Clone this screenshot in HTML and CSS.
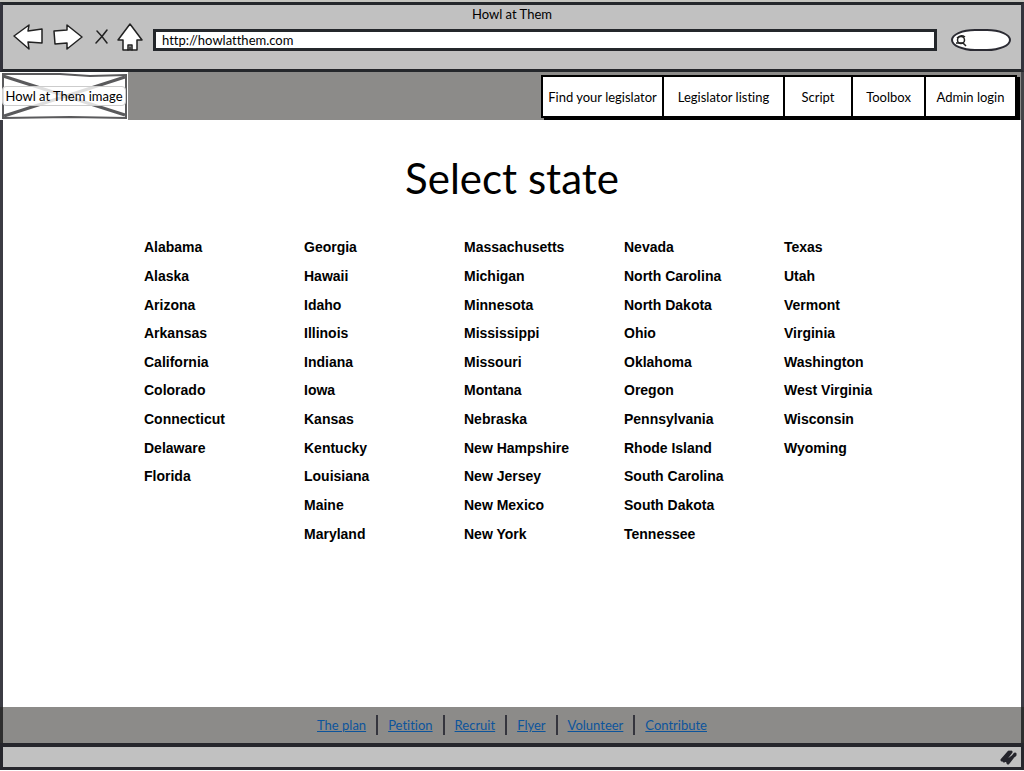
FILE: index.html
```html
<!DOCTYPE html>
<html lang="en">
<head>
<meta charset="utf-8">
<title>Howl at Them</title>
<link rel="stylesheet" href="styles.css">
</head>
<body>
<div class="window">
  <header class="chrome">
    <div class="window-title">Howl at Them</div>
    <div class="toolbar">
      <button class="tool back" aria-label="Back"><svg width="30" height="26" viewBox="0 0 30 26"><path d="M1 12 16 1 15 7 29 5 29 19 15 18 16 25Z"/></svg></button>
      <button class="tool forward" aria-label="Forward"><svg width="30" height="26" viewBox="0 0 30 26"><path d="M1 7 14 6 14 1 29 13 14 25 14 19 2 20Z"/></svg></button>
      <button class="tool stop" aria-label="Stop"><svg width="14" height="16" viewBox="0 0 14 16"><path d="M2 2Q7 7 12 14M12 1Q7 8 1 14"/></svg></button>
      <button class="tool home" aria-label="Home"><svg width="26" height="28" viewBox="0 0 26 28"><path d="M13 1 25 17 20 17 20 27 15 27 15 22 11 22 11 27 6 27 6 17 1 17Z"/><path d="M11 27H15M13 24V26"/></svg></button>
      <input class="address" type="text" aria-label="Address" value="http://howlatthem.com">
      <div class="search">
        <svg width="14" height="14" viewBox="0 0 14 14"><circle cx="7" cy="7" r="3.5"/><path d="M3 5Q7 1 11 4M2 10 9 10 12 13"/></svg>
        <input type="text" aria-label="Search">
      </div>
    </div>
  </header>
  <div class="masthead">
    <div class="logo">
      <svg class="logo-cross" viewBox="0 0 128 48" preserveAspectRatio="none"><path d="M3 4 125 43M125 5 4 44"/><path class="frame" d="M3 2 60 2 90 4 126 3 126 46 70 45 3 46Z"/></svg>
      <span>Howl at Them image</span>
    </div>
    <nav class="menu">
      <a class="wide" href="#">Find your legislator</a>
      <a class="wide" href="#">Legislator listing</a>
      <a class="script" href="#">Script</a>
      <a class="toolbox" href="#">Toolbox</a>
      <a class="admin" href="#">Admin login</a>
    </nav>
  </div>
  <main class="content">
    <h1>Select state</h1>
    <div class="states">
      <ul><li>Alabama</li><li>Alaska</li><li>Arizona</li><li>Arkansas</li><li>California</li><li>Colorado</li><li>Connecticut</li><li>Delaware</li><li>Florida</li></ul>
      <ul><li>Georgia</li><li>Hawaii</li><li>Idaho</li><li>Illinois</li><li>Indiana</li><li>Iowa</li><li>Kansas</li><li>Kentucky</li><li>Louisiana</li><li>Maine</li><li>Maryland</li></ul>
      <ul><li>Massachusetts</li><li>Michigan</li><li>Minnesota</li><li>Mississippi</li><li>Missouri</li><li>Montana</li><li>Nebraska</li><li>New Hampshire</li><li>New Jersey</li><li>New Mexico</li><li>New York</li></ul>
      <ul><li>Nevada</li><li>North Carolina</li><li>North Dakota</li><li>Ohio</li><li>Oklahoma</li><li>Oregon</li><li>Pennsylvania</li><li>Rhode Island</li><li>South Carolina</li><li>South Dakota</li><li>Tennessee</li></ul>
      <ul><li>Texas</li><li>Utah</li><li>Vermont</li><li>Virginia</li><li>Washington</li><li>West Virginia</li><li>Wisconsin</li><li>Wyoming</li></ul>
    </div>
  </main>
  <footer class="links">
    <a href="#">The plan</a>
    <a href="#">Petition</a>
    <a href="#">Recruit</a>
    <a href="#">Flyer</a>
    <a href="#">Volunteer</a>
    <a href="#">Contribute</a>
  </footer>
  <div class="status">
    <svg width="18" height="16" viewBox="0 0 18 16"><path d="M2 11 9 3M4 12 11 3M8 14 15 5M7 12 15 6"/></svg>
  </div>
</div>
</body>
</html>
```
FILE: styles.css
```css
* { box-sizing: border-box; }

body {
  margin: 0;
  background: #fff;
  color: #000;
  font: 13px/18px Lato, "Open Sans", sans-serif;
  font-variant-ligatures: none;
}

.window {
  display: flex;
  flex-direction: column;
  min-height: 100vh;
  padding-bottom: 1px;
  border-top: 2px solid #c4c4bf;
}

.chrome {
  padding-bottom: 18px;
  background: #c1c1c1;
  border: 3px solid #24272b;
  border-left-color: #33333c;
  border-right-color: #33333c;
}

.window-title { text-align: center; }

.toolbar {
  display: flex;
  align-items: center;
  padding: 0 10px;
}

.tool {
  display: flex;
  padding: 0;
  border: 0;
  background: none;
}

.tool svg {
  fill: #fff;
  stroke: #222;
  stroke-width: 1.5;
  stroke-linejoin: round;
  stroke-linecap: round;
}

.back { margin-right: 10px; }
.forward { margin-right: 12px; }
.stop { margin-right: 8px; }
.stop svg { fill: none; }
.home { margin-right: 10px; }

.address {
  flex: 1;
  min-width: 0;
  height: 22px;
  margin-top: 6px;
  padding: 0 6px;
  border: 3px solid #24272b;
  background: #fff;
  color: #000;
  font: inherit;
  font-variant-ligatures: none;
}

.search {
  display: flex;
  align-items: center;
  width: 60px;
  height: 22px;
  margin: 6px 0 0 14px;
  padding-left: 1px;
  border: 2px solid #2b2b33;
  border-radius: 24px / 11px;
  background: #fff;
}

.search svg {
  flex: none;
  fill: none;
  stroke: #222;
  stroke-width: 1.5;
}

.search input {
  width: 30px;
  padding: 0;
  border: 0;
  background: none;
}

.masthead {
  display: flex;
  justify-content: space-between;
  height: 48px;
  background: #8c8b89;
  border-right: 3px solid #444448;
}

.logo {
  position: relative;
  display: flex;
  align-items: center;
  justify-content: center;
  width: 128px;
  background: #fff;
}

.logo-cross {
  position: absolute;
  inset: 0;
  width: 100%;
  height: 100%;
  fill: none;
  stroke: #5a5a5c;
  stroke-width: 3;
}

.logo-cross .frame { stroke-width: 2; }

.logo span {
  position: relative;
  width: 124px;
  border: 1px solid #ccc;
  border-radius: 4px;
  background: rgba(255, 255, 255, 0.8);
  text-align: center;
  white-space: nowrap;
}

.menu {
  display: flex;
  height: 43px;
  margin: 3px 4px 0 0;
  border: 2px solid #000;
  border-left-width: 0;
  background: #fff;
  box-shadow: 3px 2px 0 #000;
}

.menu a {
  display: flex;
  align-items: center;
  justify-content: center;
  border-left: 2px solid #000;
  color: #000;
  text-decoration: none;
  white-space: nowrap;
}

.wide { width: 121px; }
.script { width: 68px; }
.toolbox { width: 73px; }
.admin { width: 91px; }

.content {
  flex: 1;
  border: 3px solid #3c3c44;
  border-width: 0 3px;
}

h1 {
  margin: 0;
  padding: 34px 0 0;
  font-size: 42px;
  font-weight: 400;
  line-height: 48px;
  text-align: center;
}

.states {
  display: grid;
  grid-template-columns: repeat(5, 1fr);
  margin: 31px 77px 0 141px;
  font: bold 14px/20px "Liberation Sans", Arial, sans-serif;
}

.states ul {
  display: grid;
  grid-template-rows: repeat(11, 1fr);
  align-items: center;
  height: 315px;
  margin: 0;
  padding: 0;
  list-style: none;
}

.links {
  display: flex;
  align-items: center;
  justify-content: center;
  height: 36px;
  background: #8c8b89;
  border: 3px solid #2e2e2e;
  border-width: 0 3px;
}

.links a {
  padding: 0 10px;
  color: #0c549c;
  line-height: 20px;
}

.links a + a { border-left: 2px solid #35353d; }

.status {
  display: flex;
  align-items: center;
  justify-content: flex-end;
  height: 27px;
  padding-right: 3px;
  background: #c1c1c1;
  border: 3px solid #26262c;
  border-top-width: 4px;
}

.status svg {
  fill: none;
  stroke: #25252c;
  stroke-width: 3;
  stroke-linecap: round;
}
```
